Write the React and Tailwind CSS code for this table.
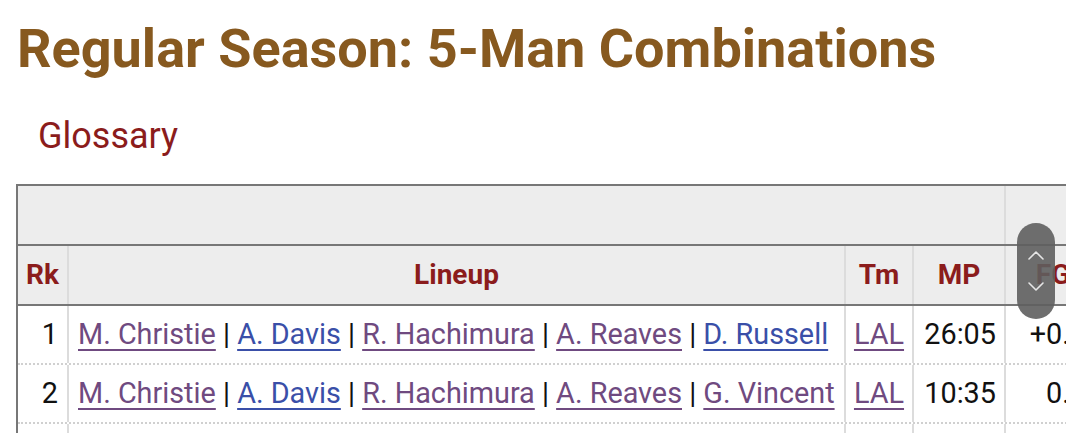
import React from "react";

const PURPLE = "text-[#6f4a80] decoration-[#6f4a80]";
const BLUE = "text-[#3a4fa8] decoration-[#3a4fa8]";

function Link({ children, blue }) {
  return (
    <a className={`underline underline-offset-[5px] decoration-2 ${blue ? BLUE : PURPLE}`}>{children}</a>
  );
}

function Lineup({ names }) {
  return (
    <span>
      {names.map((n, i) => (
        <React.Fragment key={i}>
          {i > 0 && <span className="text-[#111]"> | </span>}
          <Link blue={n[1]}>{n[0]}</Link>
        </React.Fragment>
      ))}
    </span>
  );
}

const rows = [
  {
    rk: 1,
    names: [["M. Christie"], ["A. Davis", true], ["R. Hachimura"], ["A. Reaves"], ["D. Russell", true]],
    mp: "26:05",
    fg: "+0.5",
  },
  {
    rk: 2,
    names: [["M. Christie"], ["A. Davis", true], ["R. Hachimura"], ["A. Reaves"], ["G. Vincent"]],
    mp: "10:35",
    fg: "0.0",
  },
];

export default function App() {
  return (
    <div className="relative w-[1080px] h-[433px] bg-white overflow-hidden font-['Roboto',sans-serif]">
      <h1 className="pl-[17px] pt-[17px] text-[54px] leading-[64px] font-bold text-[#87591f] whitespace-nowrap">
        Regular Season: 5-Man Combinations
      </h1>
      <div className="pl-[38px] mt-[35px] text-[36px] leading-[40px] text-[#8b1c1c]">Glossary</div>
      <div className="relative ml-[16px] mt-[28px] w-[1050px] overflow-hidden">
        <div className="w-[1090px] border-l-2 border-t-2 border-[#777]">
          {/* header row 1 */}
          <div className="flex h-[58px] bg-[#ededed]">
            <div className="w-[988px] border-r-2 border-[#dcdcdc]" />
            <div className="flex-1" />
          </div>
          {/* header row 2 */}
          <div className="flex h-[62px] bg-[#ededed] border-y-2 border-[#777] text-[28px] font-bold text-[#8b1c1c]">
            <div className="w-[51px] border-r-2 border-[#dcdcdc] flex items-center justify-center">Rk</div>
            <div className="w-[777px] border-r-2 border-[#dcdcdc] flex items-center justify-center">Lineup</div>
            <div className="w-[68px] border-r-2 border-[#dcdcdc] flex items-center justify-center">Tm</div>
            <div className="w-[92px] border-r-2 border-[#dcdcdc] flex items-center justify-center">MP</div>
            <div className="w-[94px] flex items-center justify-center">FG</div>
          </div>
          {rows.map((r) => (
            <div key={r.rk} className="flex h-[59px] text-[28.8px] text-[#111] border-b-2 border-dotted border-[#d0d0d0]">
              <div className="w-[51px] border-r-2 border-[#dcdcdc] flex items-center justify-end pr-[9px]">{r.rk}</div>
              <div className="w-[777px] border-r-2 border-[#dcdcdc] flex items-center pl-[9px] whitespace-nowrap">
                <Lineup names={r.names} />
              </div>
              <div className="w-[68px] border-r-2 border-[#dcdcdc] flex items-center justify-center">
                <Link>LAL</Link>
              </div>
              <div className="w-[92px] border-r-2 border-[#dcdcdc] flex items-center justify-end pr-[8px]">{r.mp}</div>
              <div className="w-[94px] flex items-center justify-end pr-[14px] whitespace-nowrap">{r.fg}</div>
            </div>
          ))}
          <div className="flex h-[20px]">
            <div className="w-[51px] border-r-2 border-[#dcdcdc]" />
            <div className="w-[777px] border-r-2 border-[#dcdcdc]" />
            <div className="w-[68px] border-r-2 border-[#dcdcdc]" />
            <div className="w-[92px] border-r-2 border-[#dcdcdc]" />
          </div>
        </div>
      </div>
      {/* scroll overlay */}
      <div className="absolute left-[1017px] top-[223px] w-[38px] h-[96px] rounded-full bg-[#5e5e5e]/90 flex flex-col items-center justify-center gap-[20px]">
        <svg width="18" height="11" viewBox="0 0 18 11" fill="none" stroke="#e6e6e6" strokeWidth="1.6" strokeLinecap="round" strokeLinejoin="round">
          <path d="M2 9 L9 2 L16 9" />
        </svg>
        <svg width="18" height="11" viewBox="0 0 18 11" fill="none" stroke="#e6e6e6" strokeWidth="1.6" strokeLinecap="round" strokeLinejoin="round">
          <path d="M2 2 L9 9 L16 2" />
        </svg>
      </div>
    </div>
  );
}
